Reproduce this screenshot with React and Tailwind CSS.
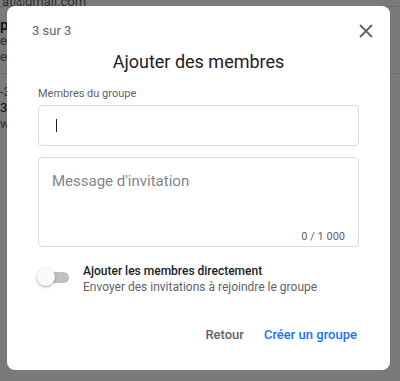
import React, { useState } from 'react';

const font = { fontFamily: 'Roboto, "Liberation Sans", sans-serif' };

export default function App() {
  const [direct, setDirect] = useState(false);
  const [message, setMessage] = useState('');

  return (
    <div className="relative w-[400px] h-[381px] overflow-hidden bg-white font-['Roboto',_'Liberation_Sans',_sans-serif]">
      {/* page behind the dialog */}
      <div className="text-[13px] text-[#202124] leading-[16px]">
        <div className="h-[12px] -mt-[6px] pl-[2px] text-[#5f6368]">at@gmail.com</div>
        <div className="border-t border-[#dadce0] pt-[10px] pb-[8px]">
          <div className="font-medium text-[15px]">p</div>
          <div className="text-[#5f6368]">ea</div>
          <div className="text-[#5f6368]">e</div>
        </div>
        <div className="border-t border-[#dadce0] pt-[10px]">
          <div className="text-[#188038]">-3</div>
          <div>3</div>
          <div className="text-[#5f6368]">w.</div>
        </div>
      </div>

      {/* overlay */}
      <div className="absolute inset-0 bg-black/[0.52] pl-[7px] pt-[6px]">
        <div className="w-[383px] h-[364px] bg-white rounded-[8px] flex flex-col">
          <div className="flex items-center justify-between pl-[25px] pr-[14px] pt-[15px] h-[35px]">
            <span className="text-[13px] leading-[20px] text-[#5f6368]">3 sur 3</span>
            <button className="w-[20px] h-[20px] flex items-center justify-center text-[#5f6368]">
              <svg width="14" height="14" viewBox="0 0 14 14">
                <path d="M1 1L13 13M13 1L1 13" stroke="currentColor" strokeWidth="1.8" />
              </svg>
            </button>
          </div>
          <h1 className="text-center text-[18px] leading-[24px] text-[#202124] mt-[9px]" style={font}>
            Ajouter des membres
          </h1>
          <div className="px-[31px] pt-[12px]">
            <label className="block text-[11px] leading-[16px] text-[#5f6368]">Membres du groupe</label>
            <div className="mt-[3px] h-[41px] border border-[#dadce0] rounded-[4px] flex items-center pl-[17px]">
              <span className="w-[1px] h-[13px] bg-[#202124]" />
            </div>
            <div className="mt-[11px] h-[90px] border border-[#dadce0] rounded-[4px] relative">
              <textarea
                value={message}
                onChange={e => setMessage(e.target.value)}
                placeholder="Message d'invitation"
                className="w-full h-[70px] resize-none outline-none pl-[13px] pt-[13px] text-[15px] leading-[20px] text-[#202124] placeholder:text-[#80868b] bg-transparent"
              />
              <span className="absolute right-[13px] bottom-[1px] text-[11px] leading-[16px] text-[#5f6368]">0 / 1 000</span>
            </div>
          </div>
          <div className="flex items-start pl-[31px] pt-[15px]">
            <button
              onClick={() => setDirect(!direct)}
              className="relative w-[36px] h-[20px] flex items-center mt-[5px]"
            >
              <span className={`absolute left-[5px] w-[26px] h-[11px] rounded-full ${direct ? 'bg-[#8ab4f8]' : 'bg-[#bdc1c6]'}`} />
              <span className={`absolute w-[18px] h-[18px] rounded-full shadow-[0_1px_3px_rgba(0,0,0,0.35)] ${direct ? 'left-[17px] bg-[#1a73e8]' : 'left-[-1px] bg-[#fafafa]'}`} />
            </button>
            <div className="ml-[9px] pt-[1px]">
              <div className="text-[12px] leading-[16px] font-medium text-[#202124]">Ajouter les membres directement</div>
              <div className="text-[12px] leading-[16px] text-[#5f6368]">Envoyer des invitations à rejoindre le groupe</div>
            </div>
          </div>
          <div className="flex justify-end items-center gap-[4px] pr-[25px] mt-auto mb-[19px]">
            <button className="px-[8px] h-[32px] text-[13px] font-medium text-[#5f6368]">Retour</button>
            <button className="px-[8px] h-[32px] text-[13px] font-medium text-[#1a73e8]">Créer un groupe</button>
          </div>
        </div>
      </div>
    </div>
  );
}
